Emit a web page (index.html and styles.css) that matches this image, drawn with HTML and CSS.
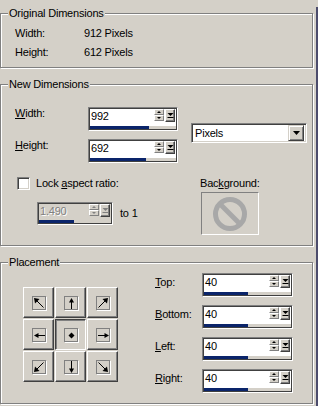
FILE: index.html
```html
<!DOCTYPE html>
<html>
<head>
<meta charset="utf-8">
<link rel="stylesheet" href="styles.css">
</head>
<body>
<div class="dlg">
  <fieldset class="grp g1">
    <legend>Original Dimensions</legend>
    <div class="orig">
      <span>Width:</span><span>912 Pixels</span>
      <span>Height:</span><span>612 Pixels</span>
    </div>
  </fieldset>

  <fieldset class="grp g2">
    <legend>New Dimensions</legend>
    <div class="nd">
      <div class="nd-top">
        <div class="nd-rows">
          <div class="frow">
            <span class="lbl lbl-nd"><u>W</u>idth:</span>
            <div class="spin w90">
              <div class="spin-in">
                <div class="spin-top">
                  <span class="val">992</span>
                  <span class="arrows"><span class="sb up"></span><span class="sb dn"></span></span>
                  <span class="pop"><svg width="7" height="7" viewBox="0 0 7 7"><path d="M0.5 1H6.5L3.5 4Z" fill="#000"/><rect x="0.5" y="5" width="6" height="1" fill="#000"/></svg></span>
                </div>
                <div class="bar"><span class="fill" style="width:59px"></span></div>
              </div>
            </div>
          </div>
          <div class="frow">
            <span class="lbl lbl-nd"><u>H</u>eight:</span>
            <div class="spin w90">
              <div class="spin-in">
                <div class="spin-top">
                  <span class="val">692</span>
                  <span class="arrows"><span class="sb up"></span><span class="sb dn"></span></span>
                  <span class="pop"><svg width="7" height="7" viewBox="0 0 7 7"><path d="M0.5 1H6.5L3.5 4Z" fill="#000"/><rect x="0.5" y="5" width="6" height="1" fill="#000"/></svg></span>
                </div>
                <div class="bar"><span class="fill" style="width:56px"></span></div>
              </div>
            </div>
          </div>
        </div>
        <div class="select">
          <span class="sel-text">Pixels</span>
          <span class="sel-btn"><svg width="7" height="4" viewBox="0 0 7 4"><path d="M0 0H7L3.5 4Z" fill="#000"/></svg></span>
        </div>
      </div>

      <div class="nd-bottom">
        <div class="lock-col">
          <div class="chkrow"><span class="chk"></span><span>Lock <u>a</u>spect ratio:</span></div>
          <div class="ratio-row">
            <div class="spin w76 disabled">
              <div class="spin-in">
                <div class="spin-top">
                  <span class="val">1.490</span>
                  <span class="arrows"><span class="sb up"></span><span class="sb dn"></span></span>
                  <span class="pop"><svg width="7" height="7" viewBox="0 0 7 7"><path d="M0.5 1H6.5L3.5 4Z" fill="#808080"/><rect x="0.5" y="5" width="6" height="1" fill="#808080"/></svg></span>
                </div>
                <div class="bar"><span class="fill" style="width:35px"></span></div>
              </div>
            </div>
            <span>to 1</span>
          </div>
        </div>
        <div class="bg-col">
          <span>Bac<u>k</u>ground:</span>
          <div class="bgbox">
            <svg width="36" height="36" viewBox="0 0 36 36"><circle cx="18" cy="18" r="14.5" fill="none" stroke="#a8a8a8" stroke-width="5"/><path d="M9 9L27 27" stroke="#a8a8a8" stroke-width="5"/></svg>
          </div>
        </div>
      </div>
    </div>
  </fieldset>

  <fieldset class="grp g3">
    <legend>Placement</legend>
    <div class="pl">
      <div class="pad">
        <span class="pb"><span class="sq"><svg width="12" height="12" viewBox="0 0 12 12"><path d="M10.5 10.5L3 3" stroke="#000"/><path d="M1 1L6.5 2L2 6.5Z" fill="#000"/></svg></span></span>
        <span class="pb"><span class="sq"><svg width="12" height="12" viewBox="0 0 12 12"><path d="M6.5 12V4" stroke="#000"/><path d="M6.5 1L4 5.5H9Z" fill="#000"/></svg></span></span>
        <span class="pb"><span class="sq"><svg width="12" height="12" viewBox="0 0 12 12"><path d="M1.5 10.5L9 3" stroke="#000"/><path d="M11 1L5.5 2L10 6.5Z" fill="#000"/></svg></span></span>
        <span class="pb"><span class="sq"><svg width="12" height="12" viewBox="0 0 12 12"><path d="M12 6.5H4" stroke="#000"/><path d="M1 6.5L5.5 4V9Z" fill="#000"/></svg></span></span>
        <span class="pb down"><span class="sq"><svg width="12" height="12" viewBox="0 0 12 12"><path d="M6.5 3.5L9.5 6.5L6.5 9.5L3.5 6.5Z" fill="#000"/></svg></span></span>
        <span class="pb"><span class="sq"><svg width="12" height="12" viewBox="0 0 12 12"><path d="M1 6.5H9" stroke="#000"/><path d="M12 6.5L7.5 4V9Z" fill="#000"/></svg></span></span>
        <span class="pb"><span class="sq"><svg width="12" height="12" viewBox="0 0 12 12"><path d="M10.5 1.5L3 9" stroke="#000"/><path d="M1 11L2 5.5L6.5 10Z" fill="#000"/></svg></span></span>
        <span class="pb"><span class="sq"><svg width="12" height="12" viewBox="0 0 12 12"><path d="M6.5 0V9" stroke="#000"/><path d="M6.5 12L4 7.5H9Z" fill="#000"/></svg></span></span>
        <span class="pb"><span class="sq"><svg width="12" height="12" viewBox="0 0 12 12"><path d="M1.5 1.5L9 9" stroke="#000"/><path d="M11 11L10 5.5L5.5 10Z" fill="#000"/></svg></span></span>
      </div>
      <div class="margins">
        <div class="frow">
          <span class="lbl lbl-pl"><u>T</u>op:</span>
          <div class="spin w91">
            <div class="spin-in">
              <div class="spin-top">
                <span class="val">40</span>
                <span class="arrows"><span class="sb up"></span><span class="sb dn"></span></span>
                <span class="pop"><svg width="7" height="7" viewBox="0 0 7 7"><path d="M0.5 1H6.5L3.5 4Z" fill="#000"/><rect x="0.5" y="5" width="6" height="1" fill="#000"/></svg></span>
              </div>
              <div class="bar"><span class="fill" style="width:44px"></span></div>
            </div>
          </div>
        </div>
        <div class="frow">
          <span class="lbl lbl-pl"><u>B</u>ottom:</span>
          <div class="spin w91">
            <div class="spin-in">
              <div class="spin-top">
                <span class="val">40</span>
                <span class="arrows"><span class="sb up"></span><span class="sb dn"></span></span>
                <span class="pop"><svg width="7" height="7" viewBox="0 0 7 7"><path d="M0.5 1H6.5L3.5 4Z" fill="#000"/><rect x="0.5" y="5" width="6" height="1" fill="#000"/></svg></span>
              </div>
              <div class="bar"><span class="fill" style="width:44px"></span></div>
            </div>
          </div>
        </div>
        <div class="frow">
          <span class="lbl lbl-pl"><u>L</u>eft:</span>
          <div class="spin w91">
            <div class="spin-in">
              <div class="spin-top">
                <span class="val">40</span>
                <span class="arrows"><span class="sb up"></span><span class="sb dn"></span></span>
                <span class="pop"><svg width="7" height="7" viewBox="0 0 7 7"><path d="M0.5 1H6.5L3.5 4Z" fill="#000"/><rect x="0.5" y="5" width="6" height="1" fill="#000"/></svg></span>
              </div>
              <div class="bar"><span class="fill" style="width:44px"></span></div>
            </div>
          </div>
        </div>
        <div class="frow">
          <span class="lbl lbl-pl"><u>R</u>ight:</span>
          <div class="spin w91">
            <div class="spin-in">
              <div class="spin-top">
                <span class="val">40</span>
                <span class="arrows"><span class="sb up"></span><span class="sb dn"></span></span>
                <span class="pop"><svg width="7" height="7" viewBox="0 0 7 7"><path d="M0.5 1H6.5L3.5 4Z" fill="#000"/><rect x="0.5" y="5" width="6" height="1" fill="#000"/></svg></span>
              </div>
              <div class="bar"><span class="fill" style="width:44px"></span></div>
            </div>
          </div>
        </div>
      </div>
    </div>
  </fieldset>
</div>
</body>
</html>
```

FILE: styles.css
```css
* { box-sizing: border-box; }
html, body { margin: 0; padding: 0; }
body {
  width: 318px;
  height: 406px;
  overflow: hidden;
  background: #d4d0c8;
  font-family: "Liberation Sans", Arial, sans-serif;
  font-size: 11px;
  line-height: 13px;
  letter-spacing: -0.2px;
  color: #000;
}
u { text-decoration: underline; text-underline-offset: 1px; }

.dlg {
  width: 318px;
  height: 406px;
  border-right: 2px solid #4c4c6c;
}

.grp {
  margin: 0;
  padding: 0;
  min-width: 0;
  width: 313px;
  border: 1px solid #808080;
  box-shadow: inset 1px 1px 0 #fff, 1px 1px 0 #fff;
}
.grp legend {
  padding: 0 1px;
  margin-left: 7px;
  line-height: 12px;
  background: #d4d0c8;
}
.g1 { margin-top: 7px; height: 61px; }
.g2 { margin-top: 10px; height: 168px; }
.g3 { margin-top: 10px; height: 148px; }

/* Original dimensions */
.orig {
  display: grid;
  grid-template-columns: 69px auto;
  grid-auto-rows: 19px;
  align-items: center;
  padding: 5px 0 0 14px;
}

/* spin edit with slider bar */
.spin {
  height: 24px;
  border: 1px solid;
  border-color: #808080 #fff #fff #808080;
}
.w90 { width: 90px; }
.w91 { width: 91px; }
.w76 { width: 76px; height: 23px; }
.spin-in {
  height: 100%;
  border: 1px solid #404040;
  background: #fff;
  display: flex;
  flex-direction: column;
}
.spin-top {
  display: flex;
  align-items: flex-start;
  height: 14px;
}
.val {
  flex: 1;
  padding-left: 1px;
  line-height: 14px;
}
.arrows {
  width: 10px;
  display: flex;
  flex-direction: column;
}
.sb {
  width: 10px;
  height: 6px;
  background: #d4d0c8;
  border: 1px solid;
  border-color: #fff #808080 #808080 #fff;
  display: flex;
  align-items: center;
  justify-content: center;
}
.sb.up::after {
  content: "";
  border-left: 2px solid transparent;
  border-right: 2px solid transparent;
  border-bottom: 2px solid #000;
}
.sb.dn::after {
  content: "";
  border-left: 2px solid transparent;
  border-right: 2px solid transparent;
  border-top: 2px solid #000;
}
.pop {
  width: 10px;
  height: 13px;
  margin: 0 1px 0 1px;
  background: #d4d0c8;
  border: 1px solid;
  border-color: #fff #404040 #404040 #fff;
  box-shadow: inset -1px -1px 0 #808080;
  display: flex;
  align-items: center;
  justify-content: center;
}
.pop svg { display: block; }
.bar {
  margin-top: auto;
  height: 3px;
  background: #d4d0c8;
  display: flex;
}
.fill { display: block; height: 3px; background: #0a246a; }

.disabled .spin-in { background: #d4d0c8; }
.disabled .val { color: #808080; text-shadow: 1px 1px 0 #fff; }
.disabled .sb.up::after { border-bottom-color: #808080; }
.disabled .sb.dn::after { border-top-color: #808080; }

/* New dimensions */
.nd { padding: 17px 0 0 14px; }
.nd-top { display: flex; }
.nd-rows { display: flex; flex-direction: column; gap: 8px; }
.frow { display: flex; align-items: flex-start; }
.lbl-nd { width: 73px; }
.select {
  margin: 16px 0 0 13px;
  width: 116px;
  height: 20px;
  border: 1px solid;
  border-color: #808080 #fff #fff #808080;
  box-shadow: inset 1px 1px 0 #404040, inset -1px -1px 0 #d4d0c8;
  background: #fff;
  display: flex;
  align-items: center;
  padding: 2px;
}
.sel-text { flex: 1; padding-left: 1px; }
.sel-btn {
  width: 16px;
  height: 16px;
  background: #d4d0c8;
  border: 1px solid;
  border-color: #d4d0c8 #404040 #404040 #d4d0c8;
  box-shadow: inset 1px 1px 0 #fff, inset -1px -1px 0 #808080;
  display: flex;
  align-items: center;
  justify-content: center;
}
.sel-btn svg { display: block; }

.nd-bottom {
  display: grid;
  grid-template-columns: 185px auto;
  margin-top: 14px;
}
.lock-col { padding-left: 2px; }
.chkrow { display: flex; align-items: center; gap: 6px; height: 13px; }
.chk {
  width: 13px;
  height: 13px;
  background: #fff;
  border: 1px solid;
  border-color: #808080 #fff #fff #808080;
  box-shadow: inset 1px 1px 0 #404040, inset -1px -1px 0 #d4d0c8;
}
.ratio-row {
  margin-top: 12px;
  padding-left: 20px;
  display: flex;
  align-items: center;
  gap: 7px;
}
.bg-col { display: flex; flex-direction: column; align-items: flex-start; }
.bgbox {
  margin: 2px 0 0 1px;
  width: 58px;
  height: 43px;
  border: 1px solid;
  border-color: #808080 #fff #fff #808080;
  display: flex;
  align-items: center;
  justify-content: center;
}
.bgbox svg { display: block; }

/* Placement */
.pl { display: flex; align-items: flex-start; padding-left: 22px; }
.pad {
  margin-top: 19px;
  display: grid;
  grid-template-columns: repeat(3, 31px);
  grid-auto-rows: 31px;
  gap: 1px;
}
.pb {
  background: #d4d0c8;
  border: 1px solid;
  border-color: #fff #404040 #404040 #fff;
  box-shadow: inset -1px -1px 0 #808080;
  display: flex;
  align-items: center;
  justify-content: center;
}
.pb.down {
  border-color: #404040 #fff #fff #404040;
  box-shadow: inset 1px 1px 0 #808080;
  padding: 1px 0 0 1px;
}
.sq {
  width: 14px;
  height: 14px;
  border: 1px solid #808080;
  box-shadow: 1px 1px 0 #fff;
  display: block;
}
.sq svg { display: block; }
.margins {
  margin: 5px 0 0 37px;
  display: flex;
  flex-direction: column;
  gap: 8px;
}
.lbl-pl { width: 47px; margin-top: 3px; }
```
